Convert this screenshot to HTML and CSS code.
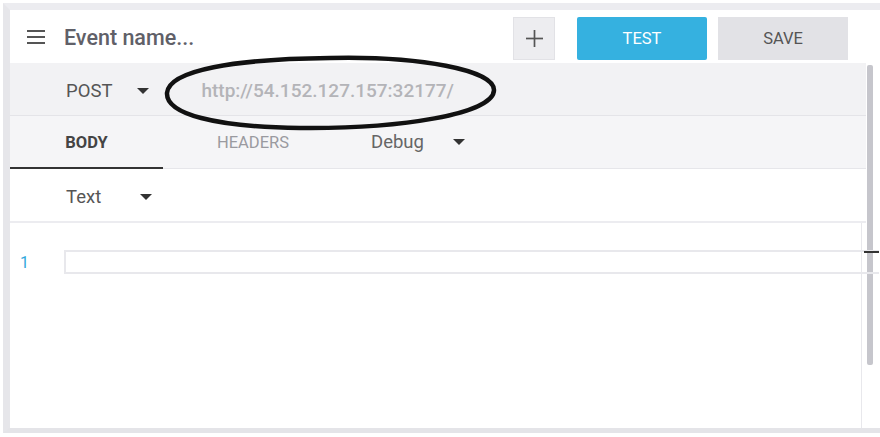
FILE: index.html
```html
<!DOCTYPE html>
<html>
<head>
<meta charset="utf-8">
<link rel="stylesheet" href="styles.css">
</head>
<body>
<div class="frame">
  <div class="panel">
    <header class="topbar">
      <svg class="menu" width="18" height="14" viewBox="0 0 18 14"><rect x="0" y="0" width="18" height="2" fill="#555"/><rect x="0" y="6" width="18" height="2" fill="#555"/><rect x="0" y="12" width="18" height="2" fill="#555"/></svg>
      <div class="title">Event name...</div>
      <button class="btn plus"><svg width="17" height="17" viewBox="0 0 16 16"><rect x="7.2" y="0" width="1.6" height="16" fill="#555"/><rect x="0" y="7.2" width="16" height="1.6" fill="#555"/></svg></button>
      <button class="btn test">TEST</button>
      <button class="btn save">SAVE</button>
    </header>
    <div class="body">
      <div class="content">
        <div class="row url-row">
          <span class="select">POST</span><span class="caret"></span>
          <span class="url">http://54.152.127.157:32177/</span>
        </div>
        <div class="row tabs">
          <div class="tab active">BODY</div>
          <div class="tab">HEADERS</div>
          <div class="debug"><span>Debug</span><span class="caret"></span></div>
        </div>
        <div class="row type-row">
          <span class="select">Text</span><span class="caret"></span>
        </div>
        <div class="editor">
          <div class="line">
            <span class="lnum">1</span>
            <div class="input"></div>
          </div>
        </div>
      </div>
      <div class="scroll"><div class="thumb"></div></div>
    </div>
    <svg class="oval" width="340" height="80" viewBox="160 54 340 80"><path d="M 330 58 C 420 56, 494 70, 494 90 C 494 114, 400 129, 300 128 C 215 127, 166 114, 167 93 C 169 70, 235 59, 330 58 Z" fill="none" stroke="#111" stroke-width="4.5"/></svg>
  </div>
</div>
</body>
</html>
```
FILE: styles.css
```css
* { box-sizing: border-box; }
html, body { margin: 0; padding: 0; background: #fff; }
body { width: 880px; height: 437px; overflow: hidden; font-family: Roboto, "Liberation Sans", sans-serif; }
.frame { padding: 3px 0 4px 3px; height: 437px; }
.panel {
  position: relative;
  height: 100%;
  border-top: 7px solid #ececf0;
  border-left: 7px solid #e6e6ea;
  border-bottom: 5px solid #e4e4e8;
  background: #fff;
  display: flex;
  flex-direction: column;
}
.topbar {
  height: 53px;
  display: flex;
  align-items: center;
  padding-left: 17px;
  flex: none;
}
.menu { margin-top: 0; }
.title { margin-left: 19px; font-size: 21.5px; font-weight: 500; color: #606068; flex: 1; margin-top: 1px; }
.btn {
  border: none;
  height: 43px;
  margin-top: 3px;
  font-family: Roboto, "Liberation Sans", sans-serif;
  font-size: 16.5px;
  padding: 0;
  display: flex; align-items: center; justify-content: center;
}
.plus { width: 42px; background: #ededf0; border: 1px solid #e2e2e6; }
.test { width: 130px; margin-left: 22px; background: #35b1e0; color: #fff; border-radius: 2px; }
.save { width: 130px; margin-left: 11px; background: #e2e2e6; color: #555; margin-right: 32px; }
.body { flex: 1; display: flex; min-height: 0; }
.content { flex: 1; display: flex; flex-direction: column; }
.row { display: flex; align-items: center; flex: none; }
.url-row { height: 53px; background: #f2f2f4; border-bottom: 1px solid #e4e4e8; padding-left: 56px; padding-top: 3px; }
.select { font-size: 18.5px; color: #555; }
.caret { width: 0; height: 0; border-left: 6px solid transparent; border-right: 6px solid transparent; border-top: 6px solid #333; }
.url-row .caret { margin-left: 25px; }
.url { margin-left: 52px; font-size: 19px; font-weight: 500; color: #b4b4b8; }
.tabs { height: 53px; background: #f5f5f7; border-bottom: 1px solid #e6e6ea; align-items: stretch; }
.tab { display: flex; align-items: center; justify-content: center; font-size: 16.5px; color: #9a9aa0; margin-top: 1px; }
.tab.active { width: 153px; color: #444; font-weight: 700; border-bottom: 2px solid #333; margin-bottom: -1px; }
.tab:nth-child(2) { width: 180px; }
.debug { display: flex; align-items: center; margin-left: 28px; font-size: 18.5px; color: #666; margin-top: 0; }
.debug .caret { margin-left: 29px; }
.type-row { height: 54px; border-bottom: 2px solid #ececf0; padding-left: 56px; padding-top: 3px; }
.type-row .caret { margin-left: 39px; }
.editor { flex: 1; position: relative; border-right: 1px solid #e8e8ec; margin-right: 4px; }
.line { display: flex; align-items: center; margin-top: 27px; }
.lnum { width: 54px; padding-left: 10px; font-size: 16px; color: #2fa8dc; }
.input { flex: 1; height: 24px; border: 2px solid #e8e8ec; border-right: none; margin-right: -18px; position: relative; }
.input::after { content: ""; position: absolute; right: 0; top: -1px; width: 15px; height: 2px; background: #333; }
.scroll { width: 14px; flex: none; padding-top: 2px; }
.thumb { width: 6px; height: 300px; margin-left: 1px; background: #c6c6cc; border-radius: 2px; }
.oval { position: absolute; left: 150px; top: 44px; pointer-events: none; }
```
